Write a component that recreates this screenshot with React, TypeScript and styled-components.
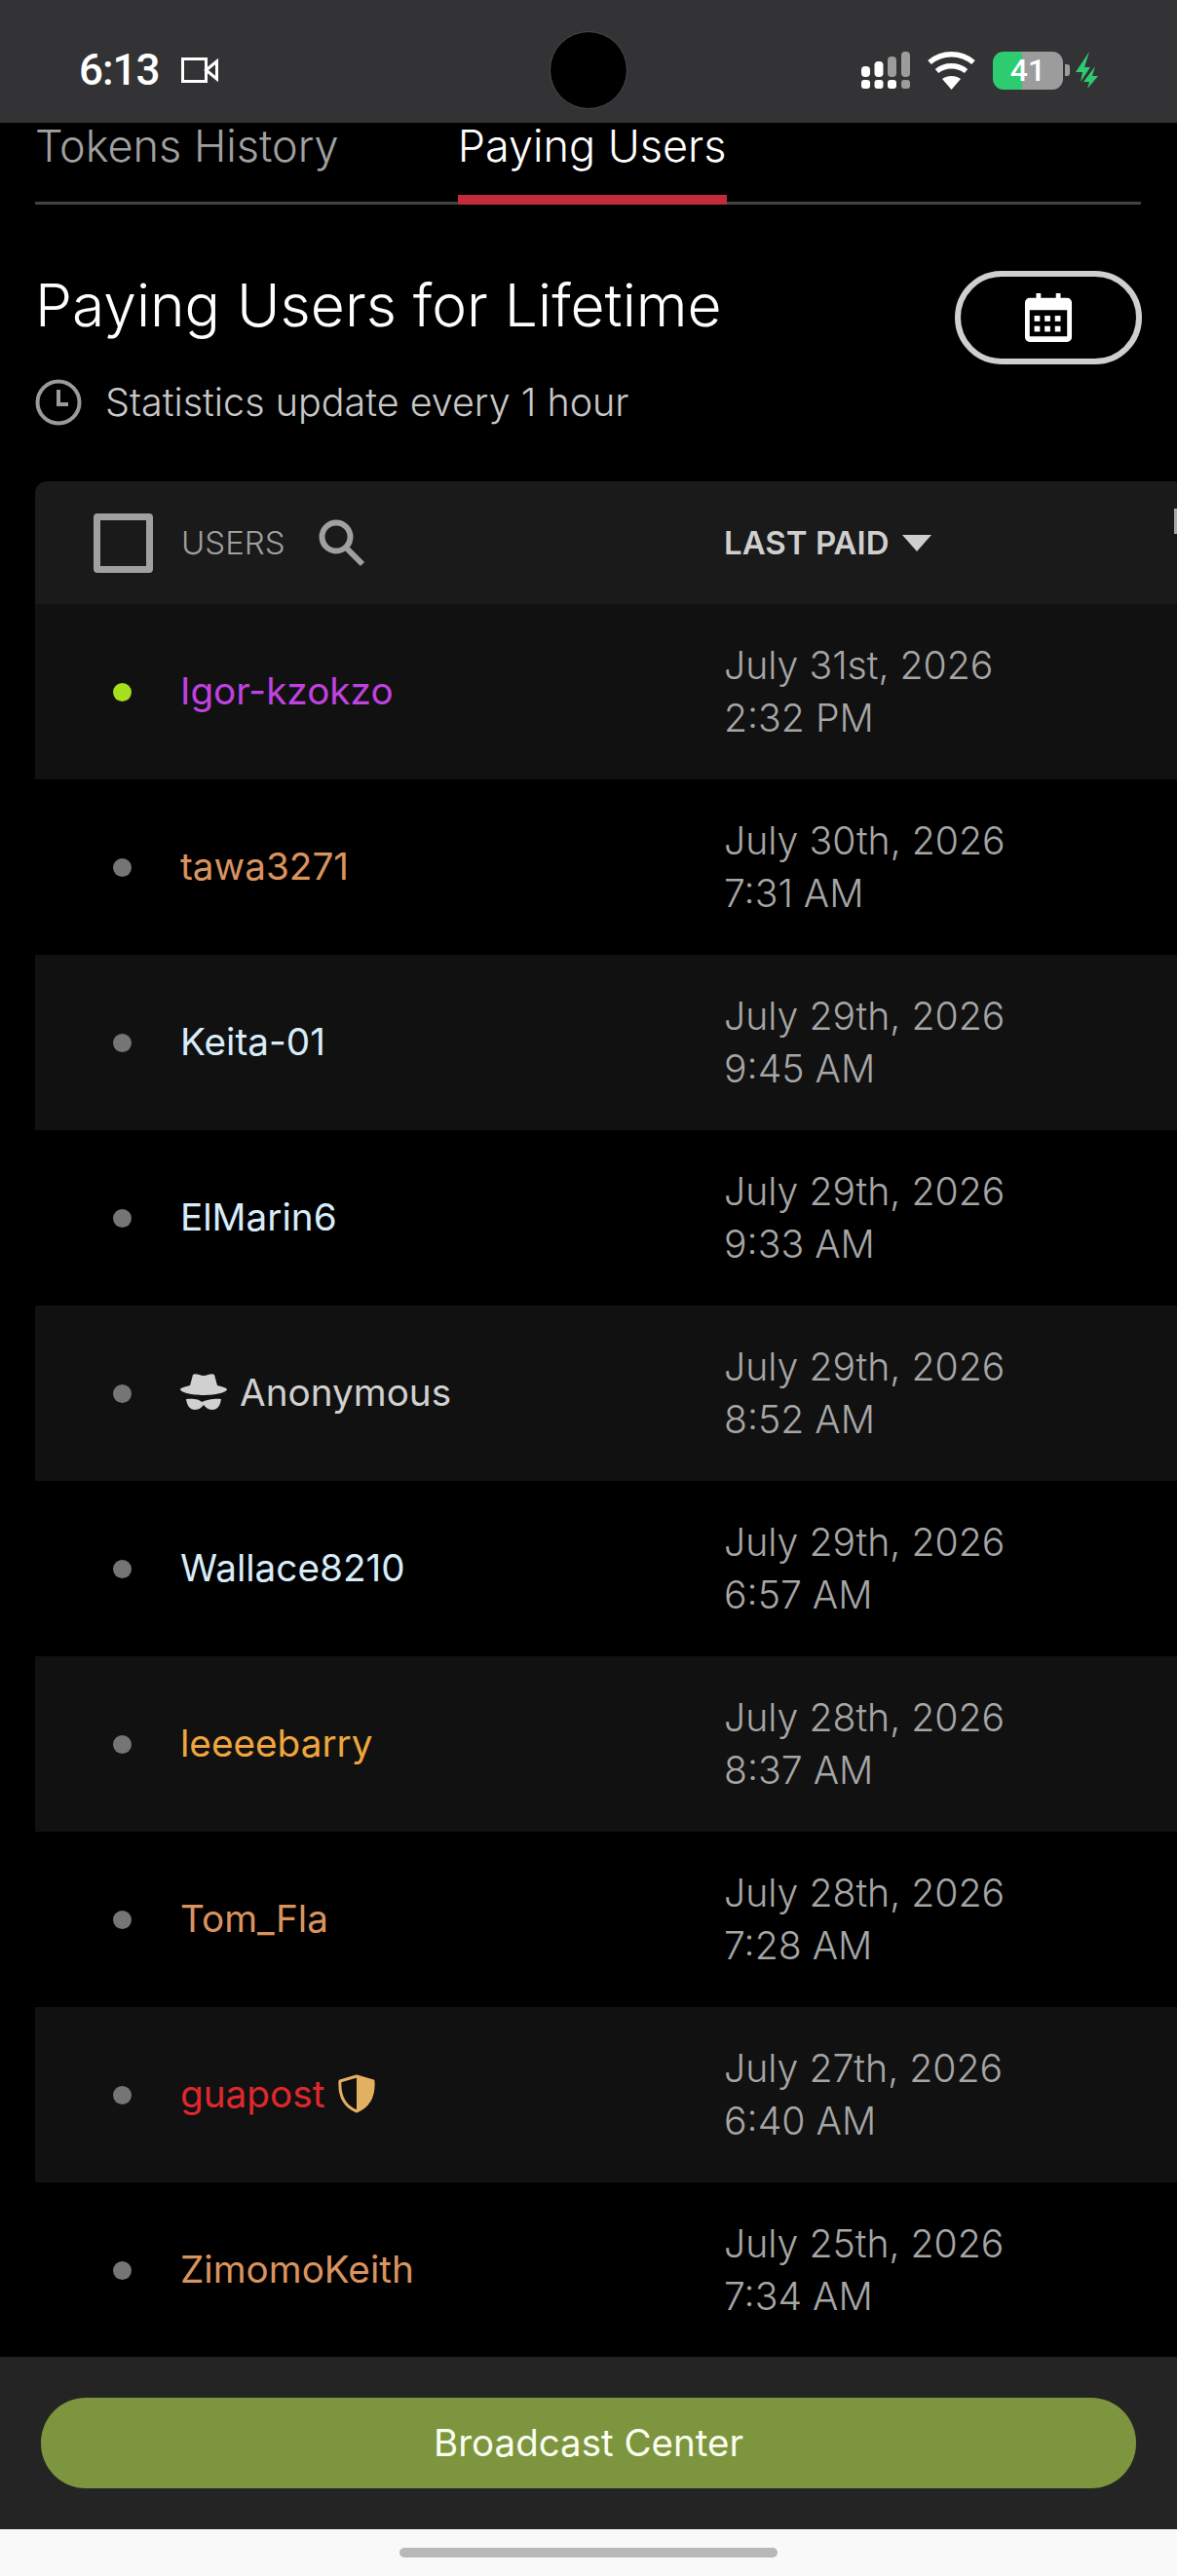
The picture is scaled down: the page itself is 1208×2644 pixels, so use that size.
import { FunctionComponent } from 'react';
import styled, { createGlobalStyle } from 'styled-components';

const GlobalStyle = createGlobalStyle`
  html, body {
    margin: 0;
    padding: 0;
    background: #000;
  }
  * {
    box-sizing: border-box;
  }
`;

const Page = styled.div`
  width: 1208px;
  height: 2644px;
  display: flex;
  flex-direction: column;
  overflow: hidden;
  background: #000;
  font-family: Inter, 'Liberation Sans', sans-serif;
`;

const StatusBar = styled.div`
  height: 126px;
  flex: none;
  display: flex;
  align-items: center;
  justify-content: space-between;
  position: relative;
  padding: 18px 80px 0 81px;
  background: #333335;
  color: #fff;
`;

const StatusLeft = styled.div`
  display: flex;
  align-items: center;
  gap: 22px;
`;

const Time = styled.span`
  font-family: Roboto, sans-serif;
  font-size: 44px;
  font-weight: 500;
  letter-spacing: -1px;
`;

const Camera = styled.div`
  position: absolute;
  left: 564px;
  top: 32px;
  width: 80px;
  height: 80px;
  border-radius: 50%;
  background: #000;
  border: 1px solid #4a4a4c;
`;

const StatusRight = styled.div`
  display: flex;
  align-items: center;
  gap: 18px;
`;

const Battery = styled.div`
  width: 72px;
  height: 39px;
  border-radius: 11px;
  display: flex;
  align-items: center;
  justify-content: center;
  background: linear-gradient(90deg, #2ecc71 41%, #9c9c9c 41%);
  font-family: Roboto, sans-serif;
  font-size: 32px;
  font-weight: 500;
  color: #fff;
`;

const BatteryGroup = styled.div`
  display: flex;
  align-items: center;
`;

const BatteryTip = styled.div`
  width: 5px;
  height: 12px;
  margin: 0 6px 0 2px;
  border-radius: 0 3px 3px 0;
  background: #9c9c9c;
`;

const Content = styled.main`
  flex: 1;
  min-height: 0;
  padding-left: 36px;
`;

const Tabs = styled.div`
  width: 1135px;
  height: 84px;
  display: flex;
  gap: 122px;
  border-bottom: 3px solid #434343;
`;

const Tab = styled.div<{ $active?: boolean }>`
  height: 84px;
  font-size: 45px;
  line-height: 48px;
  font-weight: 300;
  color: ${(p) => (p.$active ? '#fff' : '#a0a0a0')};
  border-bottom: ${(p) => (p.$active ? '10px solid #c22c3a' : 'none')};
`;

const TitleRow = styled.div`
  width: 1136px;
  margin-top: 68px;
  display: flex;
  justify-content: space-between;
  align-items: flex-start;
`;

const Title = styled.h1`
  margin: 2px 0 0;
  font-size: 60.5px;
  line-height: 66px;
  font-weight: 300;
  color: #fff;
`;

const CalendarButton = styled.button`
  width: 192px;
  height: 96px;
  border: 6px solid #cfcfcf;
  border-radius: 48px;
  background: transparent;
  color: #fff;
  display: flex;
  align-items: center;
  justify-content: center;
  padding: 0;
`;

const UpdateNote = styled.div`
  display: flex;
  align-items: center;
  gap: 24px;
  margin-top: 15px;
  height: 48px;
  font-size: 39.5px;
  font-weight: 300;
  color: #c8c8c8;
`;

const Table = styled.div`
  margin-top: 57px;
  width: 1172px;
  border-radius: 12px 0 0 0;
  overflow: hidden;
`;

const HeaderRow = styled.div`
  height: 126px;
  position: relative;
  display: grid;
  grid-template-columns: 707px 1fr;
  align-items: center;
  background: #1a1a1a;
`;

const UsersHead = styled.div`
  display: flex;
  align-items: center;
  padding-left: 60px;
`;

const Checkbox = styled.div`
  width: 61px;
  height: 61px;
  border: 7px solid #a0a0a0;
  border-radius: 4px;
  margin-right: 29px;
`;

const UsersLabel = styled.span`
  font-size: 33px;
  font-weight: 300;
  color: #a0a0a0;
  margin-right: 33px;
`;

const SortHead = styled.div`
  display: flex;
  align-items: center;
  gap: 13px;
  font-size: 33px;
  font-weight: 600;
  color: #cfcfcf;
`;

const SortArrow = styled.span`
  width: 0;
  height: 0;
  border-left: 15px solid transparent;
  border-right: 15px solid transparent;
  border-top: 17px solid #cfcfcf;
`;

const NextColumnEdge = styled.span`
  position: absolute;
  right: 0;
  top: 28px;
  width: 3px;
  height: 26px;
  background: #a8a8a8;
`;

const Row = styled.div<{ $shaded: boolean }>`
  height: 180px;
  display: grid;
  grid-template-columns: 707px 1fr;
  align-items: center;
  background: ${(p) => (p.$shaded ? '#111111' : '#000')};
`;

const UserCell = styled.div`
  display: flex;
  align-items: center;
  padding-left: 80px;
`;

const Dot = styled.span<{ $online: boolean }>`
  width: 19px;
  height: 19px;
  flex: none;
  border-radius: 50%;
  margin-right: 50px;
  background: ${(p) => (p.$online ? '#a4e01c' : '#757575')};
`;

const UserName = styled.span<{ $color: string }>`
  display: inline-flex;
  align-items: center;
  gap: 13px;
  margin-top: -3px;
  font-size: 38.7px;
  font-weight: 400;
  color: ${(p) => p.$color};
`;

const DateCell = styled.div`
  font-size: 39.2px;
  line-height: 54px;
  font-weight: 300;
  color: #a6a6a6;
`;

const Footer = styled.footer`
  height: 177px;
  flex: none;
  display: flex;
  align-items: center;
  padding: 0 42px;
  background: #242424;
`;

const BroadcastButton = styled.button`
  width: 100%;
  height: 93px;
  border: none;
  border-radius: 46px;
  padding-bottom: 3px;
  background: #7c953e;
  color: #fbfdf0;
  font-family: Inter, sans-serif;
  font-size: 38.5px;
  font-weight: 400;
`;

const NavBar = styled.div`
  height: 48px;
  flex: none;
  display: flex;
  justify-content: center;
  padding-top: 19px;
  background: #f9f9f9;
`;

const NavHandle = styled.div`
  width: 388px;
  height: 10px;
  border-radius: 5px;
  background: #b8b8b8;
`;

const CameraIcon = () => (
  <svg width="38" height="26" viewBox="0 0 38 26" fill="none" stroke="#fff" strokeWidth="3">
    <rect x="1.5" y="1.5" width="24" height="23" />
    <path d="M25.5 13 L36.5 4 V22 Z" />
  </svg>
);

const SignalIcon = () => (
  <svg width="50" height="38" viewBox="0 0 50 38">
    {[0, 13.5, 27, 41].map((x, i) => (
      <rect key={x} x={x} y={29} width="9" height="9" rx="3" fill={i < 3 ? '#fff' : '#9c9c9c'} />
    ))}
    <rect x="0" y="15" width="9" height="11" rx="4" fill="#fff" />
    <rect x="13.5" y="10" width="9" height="16" rx="4" fill="#fff" />
    <rect x="27" y="5" width="9" height="21" rx="4" fill="#9c9c9c" />
    <rect x="41" y="0" width="9" height="26" rx="4" fill="#9c9c9c" />
  </svg>
);

const WifiIcon = () => (
  <svg width="49" height="39" viewBox="0 0 49 39" fill="none" stroke="#fff" strokeWidth="5.5">
    <path d="M2 11 C15 0 34 0 47 11" />
    <path d="M9.5 20 C18 13 31 13 39.5 20" />
    <path d="M24.5 39 L15 28 C20 24 29 24 34 28 Z" fill="#fff" stroke="none" />
  </svg>
);

const ChargeIcon = () => (
  <svg width="24" height="38" viewBox="0 0 24 38" fill="#2ecc71">
    <path d="M14 0 L0 21 H7 L5 31 L15 16 H9 Z" />
    <path d="M20 15 L8 31 H14 L12 38 L23 25 H17 Z" />
  </svg>
);

const ClockIcon = () => (
  <svg width="48" height="48" viewBox="0 0 48 48" fill="none" stroke="#9a9a9a" strokeWidth="4">
    <circle cx="24" cy="24" r="21.5" />
    <path d="M24 11 V26 H34" />
  </svg>
);

const SearchIcon = () => (
  <svg width="50" height="50" viewBox="0 0 50 50" fill="none" stroke="#a0a0a0">
    <circle cx="19" cy="19" r="14.5" strokeWidth="6" />
    <path d="M29 30 L46 47" strokeWidth="6" />
  </svg>
);

const CalendarIcon = () => (
  <svg width="50" height="50" viewBox="0 0 50 52" fill="#fff">
    <rect x="12" y="0" width="5" height="8" />
    <rect x="33" y="0" width="5" height="8" />
    <path
      fillRule="evenodd"
      d="M5 5 H45 A5 5 0 0 1 50 10 V47 A5 5 0 0 1 45 52 H5 A5 5 0 0 1 0 47 V10 A5 5 0 0 1 5 5 Z M5 18 V46 H45 V18 Z"
    />
    {[11, 22, 33].map((x) => (
      <g key={x}>
        <rect x={x - 1} y="24" width="6" height="6" />
        <rect x={x - 1} y="35" width="6" height="6" />
      </g>
    ))}
  </svg>
);

const IncognitoIcon = () => (
  <svg width="48" height="40" viewBox="0 0 48 40" fill="#d0d0d0">
    <path d="M13 2 C16 0 20 3 24 3 C28 3 32 0 35 2 L38 13 C43 14 48 16 48 17 C48 20 36 23 24 23 C12 23 0 20 0 17 C0 16 5 14 10 13 Z" />
    <path d="M6 27 C12 26 20 27 22 30 C26 28 36 26 42 27 C41 34 38 38 33 38 C28 38 26 35 24 33 C22 35 20 38 15 38 C10 38 7 34 6 27 Z" />
  </svg>
);

const ShieldIcon = () => (
  <svg width="40" height="40" viewBox="0 0 40 40">
    <path
      d="M20 2 L37 7 C38 22 32 33 20 38 C8 33 2 22 3 7 Z"
      fill="#0f0f0f"
      stroke="#e3b05f"
      strokeWidth="3"
      strokeLinejoin="round"
    />
    <path d="M20 2 L37 7 C38 22 32 33 20 38 Z" fill="#e3b05f" />
  </svg>
);

type UserRow = {
  name: string;
  color: string;
  day: string;
  time: string;
  online?: boolean;
  anonymous?: boolean;
  shield?: boolean;
};

const rows: UserRow[] = [
  { name: 'Igor-kzokzo', color: '#c042e0', day: 'July 31st, 2026', time: '2:32 PM', online: true },
  { name: 'tawa3271', color: '#d9935f', day: 'July 30th, 2026', time: '7:31 AM' },
  { name: 'Keita-01', color: '#d8ecfa', day: 'July 29th, 2026', time: '9:45 AM' },
  { name: 'ElMarin6', color: '#d8ecfa', day: 'July 29th, 2026', time: '9:33 AM' },
  { name: 'Anonymous', color: '#d0d0d0', day: 'July 29th, 2026', time: '8:52 AM', anonymous: true },
  { name: 'Wallace8210', color: '#d8ecfa', day: 'July 29th, 2026', time: '6:57 AM' },
  { name: 'leeeebarry', color: '#f0a63c', day: 'July 28th, 2026', time: '8:37 AM' },
  { name: 'Tom_Fla', color: '#d9935f', day: 'July 28th, 2026', time: '7:28 AM' },
  { name: 'guapost', color: '#e0282c', day: 'July 27th, 2026', time: '6:40 AM', shield: true },
  { name: 'ZimomoKeith', color: '#d9935f', day: 'July 25th, 2026', time: '7:34 AM' },
];

const App: FunctionComponent = (): JSX.Element => {
  return (
    <Page>
      <GlobalStyle />
      <StatusBar>
        <StatusLeft>
          <Time>6:13</Time>
          <CameraIcon />
        </StatusLeft>
        <Camera />
        <StatusRight>
          <SignalIcon />
          <WifiIcon />
          <BatteryGroup>
            <Battery>41</Battery>
            <BatteryTip />
            <ChargeIcon />
          </BatteryGroup>
        </StatusRight>
      </StatusBar>
      <Content>
        <Tabs>
          <Tab>Tokens History</Tab>
          <Tab $active>Paying Users</Tab>
        </Tabs>
        <TitleRow>
          <Title>Paying Users for Lifetime</Title>
          <CalendarButton aria-label="Pick date">
            <CalendarIcon />
          </CalendarButton>
        </TitleRow>
        <UpdateNote>
          <ClockIcon />
          Statistics update every 1 hour
        </UpdateNote>
        <Table>
          <HeaderRow>
            <UsersHead>
              <Checkbox />
              <UsersLabel>USERS</UsersLabel>
              <SearchIcon />
            </UsersHead>
            <SortHead>
              LAST PAID
              <SortArrow />
            </SortHead>
            <NextColumnEdge />
          </HeaderRow>
          {rows.map((row, i) => (
            <Row key={row.name} $shaded={i % 2 === 0}>
              <UserCell>
                <Dot $online={!!row.online} />
                <UserName $color={row.color}>
                  {row.anonymous && <IncognitoIcon />}
                  {row.name}
                  {row.shield && <ShieldIcon />}
                </UserName>
              </UserCell>
              <DateCell>
                {row.day}
                <br />
                {row.time}
              </DateCell>
            </Row>
          ))}
        </Table>
      </Content>
      <Footer>
        <BroadcastButton>Broadcast Center</BroadcastButton>
      </Footer>
      <NavBar>
        <NavHandle />
      </NavBar>
    </Page>
  );
};

export default App;
